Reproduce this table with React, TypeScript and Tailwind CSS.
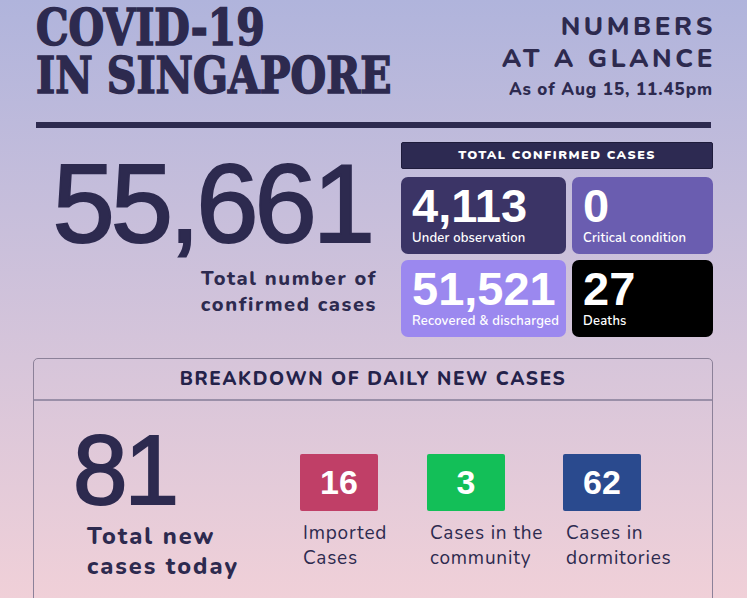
import React from "react";

const nunito = "font-['Nunito','Lato',sans-serif]";

const cards = [
  { value: "4,113", label: "Under observation", bg: "bg-[#3b3466]" },
  { value: "0", label: "Critical condition", bg: "bg-[#6a5db0]" },
  { value: "51,521", label: "Recovered & discharged", bg: "bg-[#9b88ef]" },
  { value: "27", label: "Deaths", bg: "bg-black" },
];

const daily = [
  { value: "16", label: ["Imported", "Cases"], bg: "bg-[#c03f67]", w: "w-[127px]" },
  { value: "3", label: ["Cases in the", "community"], bg: "bg-[#13bf58]", w: "w-[136px]" },
  { value: "62", label: ["Cases in", "dormitories"], bg: "bg-[#2a4a8e]", w: "w-[110px]" },
];

export default function App() {
  return (
    <div className="w-[747px] h-[598px] overflow-hidden bg-gradient-to-b from-[#b0b4dc] to-[#f0d0d8] text-[#2d2a4f]">
      {/* Header */}
      <div className="pl-[36px] pr-[34px] pt-[4px] flex justify-between">
        <h1 className="origin-left scale-x-[0.91] font-['DejaVu_Serif_Condensed','DejaVu_Serif',serif] font-bold text-[50px] leading-[48px] [-webkit-text-stroke:1.5px_#2d2a4f] whitespace-nowrap">
          COVID-19
          <br />
          IN SINGAPORE
        </h1>
        <div className={`${nunito} text-right font-extrabold pt-[7px]`}>
          <p className="text-[26px] leading-[32px] tracking-[3.6px] mr-[-3px]">
            NUMBERS
            <br />
            AT A GLANCE
          </p>
          <p className="text-[17px] leading-[22px] tracking-[0.9px] mt-[4px]">As of Aug 15, 11.45pm</p>
        </div>
      </div>
      <div className="mx-[36px] mt-[21px] h-[6px] bg-[#2d2a4f]" />

      {/* Totals */}
      <div className="flex pl-[36px] pr-[34px] mt-[14px]">
        <div className="w-[340px] flex flex-col items-end">
          <div className="font-['Liberation_Sans',sans-serif] text-[112px] leading-[100px] tracking-[-4px] mt-[12px] mr-[5px] [-webkit-text-stroke:2px_#2d2a4f]">
            55,661
          </div>
          <p className={`${nunito} font-extrabold text-[20px] leading-[26px] tracking-[1.6px] text-right mt-[12px] mr-[-1px]`}>
            Total number of
            <br />
            confirmed cases
          </p>
        </div>
        <div className="ml-auto w-[312px]">
          <div className={`${nunito} h-[27px] bg-[#2d2a52] border border-[#1f1c3c] rounded-[2px] text-white text-[12.5px] font-black tracking-[1.5px] flex items-center justify-center`}>
            TOTAL CONFIRMED CASES
          </div>
          <div className="grid grid-cols-[165px_141px] gap-[6px] mt-[8px]">
            {cards.map((c) => (
              <div key={c.label} className={`${c.bg} h-[77px] rounded-[7px] text-white px-[11px] pt-[6px]`}>
                <div className="font-['Liberation_Sans',sans-serif] font-bold text-[47px] leading-[46px]">{c.value}</div>
                <div className={`${nunito} font-semibold text-[13px] leading-[18px] tracking-[0.2px] whitespace-nowrap`}>
                  {c.label}
                </div>
              </div>
            ))}
          </div>
        </div>
      </div>

      {/* Breakdown */}
      <div className="ml-[33px] mr-[34px] mt-[21px] border border-[#8c8199] rounded-t-[5px] h-[260px]">
        <div className={`${nunito} h-[42px] border-b-2 border-[#9a8fa8] flex items-center justify-center font-extrabold text-[19px] tracking-[1.6px] text-[#24224a]`}>
          BREAKDOWN OF DAILY NEW CASES
        </div>
        <div className="flex pt-[24px]">
          <div className="w-[266px] pl-[39px]">
            <div className="font-['Liberation_Sans',sans-serif] text-[98px] leading-[90px] tracking-[-3px] [-webkit-text-stroke:2px_#2d2a4f]">
              81
            </div>
            <p className={`${nunito} font-extrabold text-[23.5px] leading-[30px] tracking-[2px] pl-[14px] mt-[6px] whitespace-nowrap`}>
              Total new
              <br />
              cases today
            </p>
          </div>
          <div className="flex pt-[29px]">
            {daily.map((d) => (
              <div key={d.value} className={d.w}>
                <div className={`${d.bg} w-[78px] h-[57px] rounded-[2px] text-white flex items-center justify-center font-['Liberation_Sans',sans-serif] font-bold text-[34px]`}>
                  {d.value}
                </div>
                <p className={`${nunito} text-[19px] leading-[25px] tracking-[0.8px] mt-[10px] pl-[3px] whitespace-nowrap`}>
                  {d.label[0]}
                  <br />
                  {d.label[1]}
                </p>
              </div>
            ))}
          </div>
        </div>
      </div>
    </div>
  );
}
